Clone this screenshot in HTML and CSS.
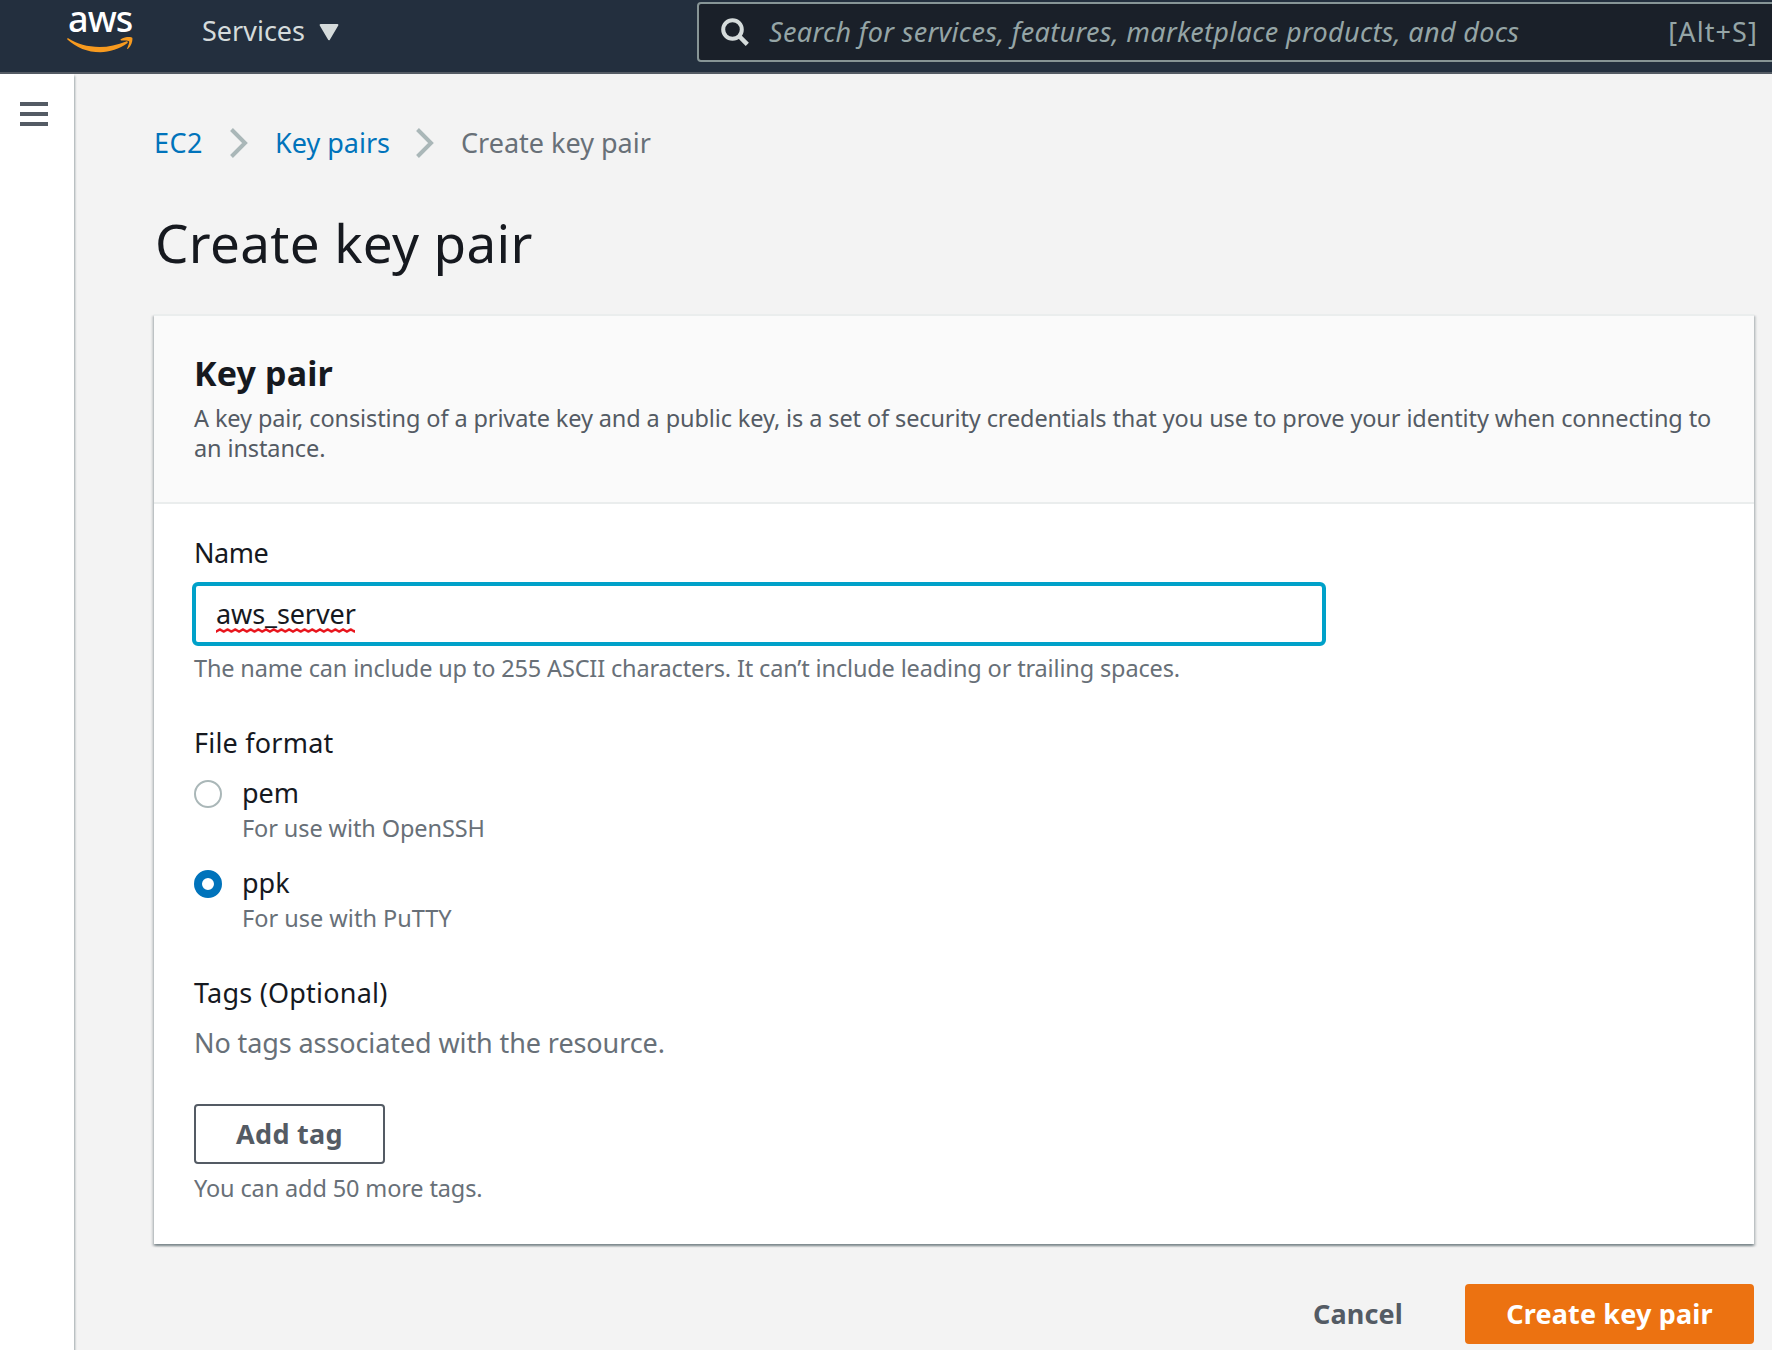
FILE: index.html
```html
<!DOCTYPE html>
<html lang="en">
<head>
<meta charset="utf-8">
<title>Create key pair</title>
<link rel="stylesheet" href="styles.css">
</head>
<body>
<header class="topbar">
  <div class="logo">
    <span class="logo-text">aws</span>
    <svg class="logo-smile" width="67" height="18" viewBox="0 0 68 18"><path d="M1.200 1.200C10 7 21 10 33 10c9 0 18.500-2 27-5.600 1.300-.5 2.400.9 1.100 1.900C53.500 12.200 43 15.300 33.800 15.300 20.800 15.300 9.200 10.400.4 2.300-.3 1.600.3.700 1.200 1.200z" fill="#f79a1f"/><path d="M54.500 2.200C58.500-.6 65.500-.5 66.200.6c.8 1.300-.3 8.200-4.200 11.300-.6.500-1.200.2-.9-.5.900-2.200 2.600-6.200 1.800-7.300-.9-1.100-5.500-.8-7.500-.6-.7.100-1.500-.7-.9-1.300z" fill="#f79a1f"/></svg>
  </div>
  <div class="services"><span class="services-label">Services</span><svg width="20" height="17" viewBox="0 0 20 17"><path d="M1.600 1h16.800L10 15.200z" fill="#d5dbdb" stroke="#d5dbdb" stroke-width="2" stroke-linejoin="round"/></svg></div>
  <div class="search">
    <svg width="28" height="28" viewBox="0 0 28 28" fill="none" stroke="#d5dbdb"><circle cx="11.500" cy="11.500" r="9.300" stroke-width="4"/><path d="M18 18l8.300 8.300" stroke-width="4.500"/></svg>
    <span class="placeholder">Search for services, features, marketplace products, and docs</span>
    <span class="shortcut">[Alt+S]</span>
  </div>
</header>
<div class="layout">
  <aside class="rail"><svg width="28" height="24" viewBox="0 0 28 24" fill="#545b64"><path d="M0 0h28v4H0zM0 10h28v4H0zM0 20h28v4H0z"/></svg></aside>
  <main class="content">
    <nav class="crumbs">
      <a class="crumb crumb-root">EC2</a>
      <svg class="chevron" width="18" height="30" viewBox="0 0 18 30"><path d="M1.500 1.500L15 15 1.500 28.500" fill="none" stroke="#aab7b8" stroke-width="4"/></svg>
      <a class="crumb crumb-parent">Key pairs</a>
      <svg class="chevron" width="18" height="30" viewBox="0 0 18 30"><path d="M1.500 1.500L15 15 1.500 28.500" fill="none" stroke="#aab7b8" stroke-width="4"/></svg>
      <span class="crumb-here">Create key pair</span>
    </nav>
    <h1 class="title">Create key pair</h1>
    <section class="card">
      <div class="card-head">
        <h2 class="card-title">Key pair</h2>
        <p class="card-desc">A key pair, consisting of a private key and a public key, is a set of security credentials that you use to prove your identity when connecting to<br>an instance.</p>
      </div>
      <div class="card-body">
        <div class="label label-name">Name</div>
        <div class="input"><span class="value">aws_server<svg class="squiggle" width="139" height="5"><defs><pattern id="wave" width="7.700" height="5" patternUnits="userSpaceOnUse"><path d="M-1.900 2.500L0 3.600 3.850 1.400 7.700 3.600 9.600 2.500" fill="none" stroke="#e8131b" stroke-width="2.300"/></pattern></defs><rect width="139" height="5" fill="url(#wave)"/></svg></span></div>
        <div class="hint hint-name">The name can include up to 255 ASCII characters. It can’t include leading or trailing spaces.</div>
        <div class="label label-format">File format</div>
        <div class="option">
          <span class="radio"></span>
          <div><div class="option-name">pem</div><div class="hint hint-pem">For use with OpenSSH</div></div>
        </div>
        <div class="option">
          <span class="radio radio-on"></span>
          <div><div class="option-name">ppk</div><div class="hint hint-ppk">For use with PuTTY</div></div>
        </div>
        <div class="label label-tags">Tags (Optional)</div>
        <div class="empty">No tags associated with the resource.</div>
        <div class="button button-add">Add tag</div>
        <div class="hint hint-tags">You can add 50 more tags.</div>
      </div>
    </section>
    <div class="actions">
      <div class="cancel">Cancel</div>
      <div class="button button-primary">Create key pair</div>
    </div>
  </main>
</div>
</body>
</html>
```
FILE: styles.css
```css
* { box-sizing: border-box; }
body {
  margin: 0;
  height: 1350px;
  overflow: hidden;
  display: flex;
  flex-direction: column;
  background: #f3f3f3;
  color: #16191f;
  font-family: "Noto Sans", sans-serif;
  font-size: 27px;
  line-height: 36px;
  white-space: nowrap;
}
svg { display: block; flex: none; }
h1, h2, p { margin: 0; font-weight: 400; }

.topbar {
  height: 74px;
  flex: none;
  display: flex;
  align-items: flex-start;
  background: #232f3e;
  border-bottom: 2px solid #545b64;
}
.logo { width: 68px; margin-left: 67px; padding-top: 2px; }
.logo-text {
  display: block;
  height: 35px;
  padding-left: 1px;
  color: #fff;
  font-size: 36px;
  font-weight: 500;
  line-height: 33px;
  letter-spacing: -.9px;
}
.services {
  width: 494px;
  margin-left: 67px;
  padding-top: 13px;
  display: flex;
  color: #d5dbdb;
}
.services-label { width: 117px; }
.services svg { margin-top: 11px; }
.search {
  flex: 1;
  height: 60px;
  margin: 2px -6px 0 1px;
  padding: 0 18px 0 22px;
  display: flex;
  align-items: center;
  background: #1a2029;
  border: 2px solid #879596;
  border-radius: 4px;
  color: #95a5a6;
}
.placeholder { flex: 1; margin-left: 20px; font-style: italic; letter-spacing: .33px; }
.shortcut { letter-spacing: 1.100px; }

.layout { flex: 1; display: flex; min-height: 0; }
.rail {
  width: 74px;
  flex: none;
  padding: 28px 20px;
  background: #fff;
  box-shadow: 1px 2px 2px rgba(0, 28, 36, .35);
}
.content { flex: 1; min-width: 0; padding: 51px 18px 0 80px; }

.crumbs { display: flex; align-items: center; color: #687078; }
.crumb { color: #0073bb; }
.crumb-root { width: 76px; letter-spacing: .4px; }
.crumb-parent { width: 141px; margin-left: 27px; }
.crumb-here { margin-left: 27px; }
.title { margin-top: 52px; padding-left: 1px; font-size: 53px; line-height: 60px; letter-spacing: .35px; }

.card {
  margin-top: 41px;
  background: #fff;
  border-top: 2px solid #eaeded;
  box-shadow: 0 2px 2px rgba(0, 28, 36, .3), 2px 2px 2px rgba(0, 28, 36, .15), -2px 2px 2px rgba(0, 28, 36, .15);
}
.card-head {
  height: 188px;
  padding: 37px 40px 0;
  background: #fafafa;
  border-bottom: 2px solid #eaeded;
}
.card-title { font-size: 34px; font-weight: 700; line-height: 40px; letter-spacing: .15px; }
.card-desc { margin-top: 10px; font-size: 23.500px; line-height: 30px; letter-spacing: -.11px; color: #545b64; }
.card-body { padding: 31px 40px 41px; }
.input {
  width: 1134px;
  height: 64px;
  margin: 11px 0 7px -2px;
  padding: 10px 20px;
  border: 4px solid #00a1c9;
  border-radius: 6px;
}
.value { position: relative; letter-spacing: -.1px; }
.squiggle { position: absolute; left: 0; bottom: -1px; }
.hint { font-size: 23.500px; line-height: 30px; color: #687078; }
.hint-name { letter-spacing: -.15px; }
.hint-pem { letter-spacing: -.1px; }
.label-name { letter-spacing: -.5px; }
.label-format, .label-tags { margin-top: 42px; letter-spacing: .22px; }
.option { display: flex; gap: 20px; margin-top: 13px; }
.option + .option { margin-top: 21px; }
.option-name { margin-top: 1px; }
.option .hint { margin-top: 2px; }
.radio {
  width: 28px;
  height: 28px;
  margin-top: 6px;
  border: 2px solid #aab7b8;
  border-radius: 50%;
}
.radio-on { border: 8px solid #0073bb; }
.empty { margin: 14px 0 43px; letter-spacing: -.1px; color: #687078; }
.button {
  height: 60px;
  display: flex;
  align-items: center;
  justify-content: center;
  border: 2px solid #545b64;
  border-radius: 4px;
  color: #545b64;
  font-weight: 700;
  letter-spacing: .15px;
}
.button-add { width: 191px; padding-bottom: 1px; letter-spacing: .3px; }
.hint-tags { margin-top: 9px; letter-spacing: -.13px; }
.actions { display: flex; justify-content: flex-end; align-items: center; gap: 62px; margin-top: 40px; }
.cancel { color: #545b64; font-weight: 700; letter-spacing: .15px; }
.button-primary { width: 289px; background: #ec7211; border-color: #ec7211; color: #fff; }
```
